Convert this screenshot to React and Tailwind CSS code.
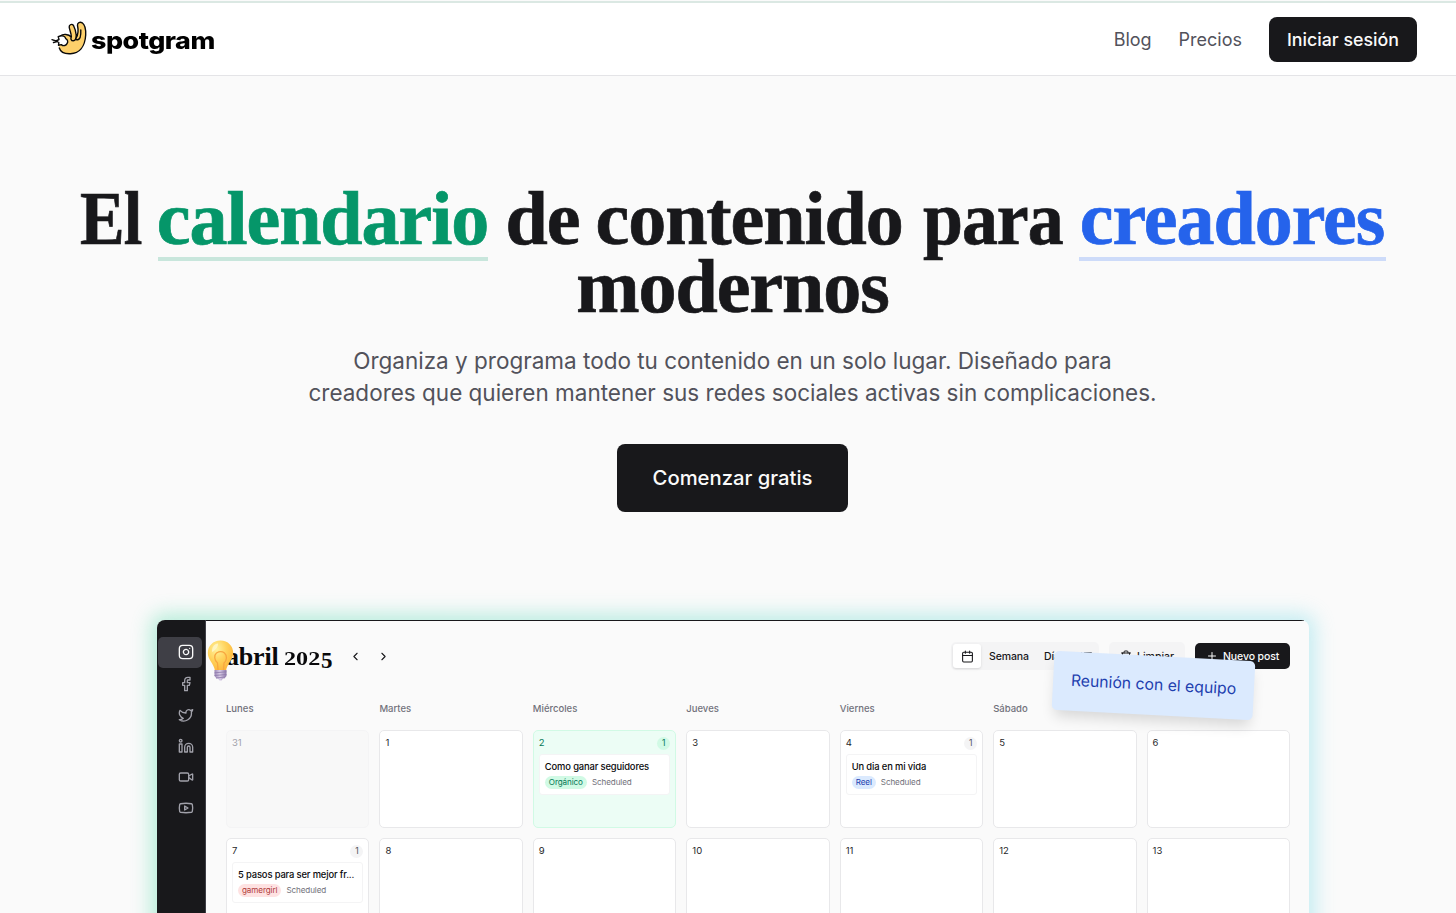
import React from "react";
import {
  Instagram, Facebook, Twitter, Linkedin, Video, Youtube,
  ChevronLeft, ChevronRight, Calendar, Trash2, Plus, List,
} from "lucide-react";

const weekdays = ["Lunes", "Martes", "Miércoles", "Jueves", "Viernes", "Sábado", "Domingo"];

const days = [
  { n: 31, muted: true },
  { n: 1 },
  { n: 2, green: true, post: { title: "Como ganar seguidores", tag: "Orgánico", tone: "bg-[#d1fae5] text-[#047857]" } },
  { n: 3 },
  { n: 4, post: { title: "Un dia en mi vida", tag: "Reel", tone: "bg-[#dbeafe] text-[#1e40af]" } },
  { n: 5 },
  { n: 6 },
  { n: 7, post: { title: "5 pasos para ser mejor fr...", tag: "gamergirl", tone: "bg-[#fee2e2] text-[#b03a3a]" } },
  { n: 8 }, { n: 9 }, { n: 10 }, { n: 11 }, { n: 12 }, { n: 13 },
];

function Sloth() {
  return (
    <svg className="h-[36px] w-[37px] shrink-0" viewBox="0 0 37 36" fill="none" stroke="#0b0b0b" strokeWidth="1.4" strokeLinecap="round" strokeLinejoin="round">
      <path fill="#fdd06b" stroke="none" d="M8.300 27 C9.500 31 14 33 19.500 32.700 C28 32 34 26 34.700 14 C34.900 9 34.300 4 31.500 1.800 C29 .8 26.500 1.500 26 4.500 C27 8 27 11 26 14.500 C25 11 24 7 22.500 4.200 C21 2.500 18 3.500 18.200 6 C18.500 9 20.500 12 20.500 16 C18 13.500 13 12.500 10 14.500 C10 20 7.500 23 8.300 27Z" />
      <path fill="#fff" stroke="none" d="M22.800 4.500 L26.400 4.500 C27 8 27 12 25.600 15.500 C25.300 11 24.500 8 22.800 4.500Z" />
      <path d="M9.300 15 C12 12.500 17.500 13 20.400 16 C20.300 12 18.500 9 18.200 6 C18 3.500 21 2.500 22.500 4.500 C24 7.500 25 10.500 25.200 14 C25.200 17.500 24.500 19.700 22.300 19.800 C20 19.800 19.300 17.500 20.400 15.500 M25.100 17 C27 14 27.500 9 26.500 4.500 C26.200 1.500 29 .6 31.200 1.800 C34.300 4 34.900 9 34.700 14 C34 26 28 32.300 19.500 32.700 C14 33 9.500 31 8.300 27 M29.800 9 C30 14 29 18.500 26.600 18.800 C25.500 18.900 25 18.200 25 17.200" />
      <path fill="#fff" d="M9.300 15 L7.200 15.600 L8 18.500 L5 20 L7.800 21.500 L7.500 24.300 L10.300 23.600 C12.500 25.500 15.500 24.500 16.200 22.300 C17.300 20.500 16.500 18.500 14.700 17.700 C14.200 15.500 11.800 14.200 9.300 15Z" />
      <path d="M1 18.700 L5 20 M2.500 21.500 L6 20.500" />
    </svg>
  );
}

function Bulb() {
  return (
    <svg className="absolute left-[50px] top-[20px] h-[41px] w-[27px]" viewBox="0 0 27 41">
      <defs>
        <radialGradient id="glass" cx="0.35" cy="0.28" r="0.75">
          <stop offset="0" stopColor="#fff3a0" />
          <stop offset="0.5" stopColor="#ffd35c" />
          <stop offset="1" stopColor="#fdb53a" />
        </radialGradient>
        <linearGradient id="base" x1="0" x2="1" y1="0" y2="0">
          <stop offset="0" stopColor="#9a86b5" />
          <stop offset="0.45" stopColor="#d9cde6" />
          <stop offset="1" stopColor="#8d78aa" />
        </linearGradient>
      </defs>
      <path fill="url(#glass)" d="M13.500 .5 C6 .5 .8 6 .8 13 C.8 20 7 23.500 8 31 L19 31 C20 23.500 26.200 20 26.200 13 C26.200 6 21 .5 13.500 .5Z" />
      <path fill="#fff8cf" opacity=".8" d="M5 10 C5.500 6 8 3.800 11 3.500 C11.500 6 9 10 5 12Z" />
      <path fill="none" stroke="#f8a640" strokeWidth="1.300" d="M11 30 L10.500 23 C7 20.500 7 15 9.500 13 C12 11.500 15.500 11.500 17.500 13 C20.300 15.500 20 20.500 17 23 L16.500 30" />
      <path fill="url(#base)" d="M7.500 30 H19.500 V36 L17.500 38.500 H16 L14.500 40.500 H12.500 L11 38.500 H9.500 L7.500 36Z" />
      <path stroke="#8d78aa" strokeWidth=".8" d="M7.500 32.800 L19.500 31.800 M7.500 35.500 L19.500 34.500 M9 38 L18 37" />
    </svg>
  );
}

function Day({ day }) {
  const box = day.muted
    ? "border-[#f4f4f5] bg-[#f8f8f8] text-[#a1a1aa]"
    : day.green
      ? "border-[#d1fae5] bg-[#ecfdf5] text-[#047857]"
      : "border-[#e8e8ea] bg-white text-[#27272a]";
  const count = day.green ? "bg-[#d1fae5] text-[#047857]" : "bg-[#f4f4f5] text-[#52525b]";
  return (
    <div className={"h-[98px] rounded-[5px] border px-[5px] pt-[5px] " + box}>
      <div className="flex h-[14px] items-center justify-between text-[9.5px]">
        <span className="pt-px">{day.n}</span>
        {day.post && <span className={"grid h-[13px] w-[13px] place-items-center rounded-full text-[8.5px] " + count}>1</span>}
      </div>
      {day.post && (
        <div className="mt-[4px] h-[41px] rounded-[3px] border border-[#f4f4f5] bg-white px-[5px] pt-[5px]">
          <div className="whitespace-nowrap text-[9.4px] font-medium leading-[13px] tracking-[-0.14px] text-[#09090b]">{day.post.title}</div>
          <div className="mt-[3px] flex items-center gap-[5px] text-[8.100px] leading-[13px] tracking-[-0.1px]">
            <span className={"rounded-full px-[4px] " + day.post.tone}>{day.post.tag}</span>
            <span className="text-[#71717a]">Scheduled</span>
          </div>
        </div>
      )}
    </div>
  );
}

function Header() {
  return (
    <header className="flex h-[76px] items-center justify-between border-b border-[#e4e4e7] bg-white pl-[51px] pr-[39px] pt-[3px]">
      <a className="flex items-center gap-[3px]">
        <Sloth />
        <span className="mt-[4px] origin-left scale-x-[1.14] whitespace-nowrap text-[23.500px] font-extrabold leading-[30px] tracking-[-0.4px] text-black">spotgram</span>
      </a>
      <nav className="flex items-center text-[18px] text-[#52525b]">
        <a className="tracking-[-0.05px]">Blog</a>
        <a className="ml-[27px]">Precios</a>
        <a className="ml-[27px] flex h-[45px] w-[148px] items-center justify-center rounded-[8px] bg-[#18181b] pt-[2px] text-[17.800px] font-medium text-[#fafafa]">Iniciar sesión</a>
      </nav>
    </header>
  );
}

function Hero() {
  return (
    <section className="flex flex-col items-center pl-[9px] pt-[108px]">
      <h1 className="flex flex-col items-center font-['Liberation_Serif'] text-[76px] font-bold leading-[68px] tracking-[-1.05px] text-[#18181b] [-webkit-text-stroke:0.7px_currentColor]">
        <span className="flex h-[68px] whitespace-nowrap">
          <span className="w-[78px] origin-left scale-x-[0.88]">El</span>
          <span className="flex h-[77px] w-[330px] justify-center border-b-4 border-[#c8e6dc] text-[#059669]">calendario</span>
          <span className="ml-[18px] w-[90px]">de</span>
          <span className="w-[327px]">contenido</span>
          <span className="w-[156px] origin-left scale-x-[0.945]">para</span>
          <span className="flex h-[77px] w-[307px] justify-center border-b-4 border-[#cddbf9] text-[#2563eb]">creadores</span>
        </span>
        <span>modernos</span>
      </h1>
      <p className="mt-[25px] text-center text-[22.500px] leading-[32px] text-[#52525b]">
        Organiza y programa todo tu contenido en un solo lugar. Diseñado para<br />
        creadores que quieren mantener sus redes sociales activas sin complicaciones.
      </p>
      <a className="mt-[35px] flex h-[68px] w-[231px] items-center justify-center rounded-[8px] bg-[#18181b] text-[20.250px] font-medium text-[#fafafa]">Comenzar gratis</a>
    </section>
  );
}

function Preview() {
  const side = [Instagram, Facebook, Twitter, Linkedin, Video, Youtube];
  return (
    <section className="relative ml-[157px] mt-[108px] w-[1152px]">
      <div className="absolute -inset-[6px] rounded-xl bg-gradient-to-r from-[#34d399] to-[#5fd3e3] opacity-35 blur-[10px]" />
      <div className="relative flex h-[600px] overflow-hidden rounded-[8px] bg-[#fafafa]">
        <aside className="w-[49px] shrink-0 border-r border-[#3f3f46] bg-[#18181b] pt-[17px]">
          {side.map((Icon, i) => (
            <div key={i} className={"ml-px flex h-[31px] w-[44px] items-center justify-end rounded-[5px] pr-[8px] " + (i === 0 ? "bg-[#3f3f46] pb-px text-[#fafafa]" : "text-[#a1a1aa]")}>
              <Icon size={16} strokeWidth={2} />
            </div>
          ))}
        </aside>
        <div className="flex-1">
          <div className="mr-[5px] h-px bg-[#18181b]" />
          <div className="pl-[20px] pr-[19px] pt-[21px]">
            <div className="flex h-[28px] items-center justify-between">
              <div className="flex items-center">
                <h2 className="flex w-[107px] translate-y-[2px] items-baseline whitespace-nowrap font-['Liberation_Serif'] text-[26px] font-bold leading-[28px] tracking-[-0.2px] text-[#09090b]">
                  <span className="w-[58px]">abril</span>
                  <span className="w-[37px] origin-left scale-x-[1.27] text-[19px] tracking-normal">202</span>
                  <span className="translate-y-[3px] text-[23px]">5</span>
                </h2>
                <ChevronLeft className="ml-[16px] text-[#18181b]" size={13} strokeWidth={2} />
                <ChevronRight className="ml-[15px] text-[#18181b]" size={13} strokeWidth={2} />
              </div>
              <div className="flex items-center text-[10.5px] font-medium text-[#18181b]">
                <div className="flex h-[28px] w-[148px] items-center rounded-[5px] bg-[#f4f4f5] pl-[2px]">
                  <span className="grid h-[24px] w-[28px] place-items-center rounded-[3px] bg-white shadow-sm"><Calendar size={13} /></span>
                  <span className="ml-[8px] translate-y-px tracking-[-0.1px]">Semana</span>
                  <span className="ml-[15px] translate-y-px">Día</span>
                  <List className="ml-[20px]" size={13} />
                </div>
                <div className="ml-[10px] flex h-[28px] w-[76px] items-center rounded-[5px] bg-[#f4f4f5] pl-[11px]">
                  <Trash2 size={12} /><span className="ml-[5px] translate-y-px">Limpiar</span>
                </div>
                <div className="ml-[10px] flex h-[26px] w-[95px] items-center rounded-[5px] bg-[#18181b] pl-[11px] text-[#fafafa]">
                  <Plus size={12} /><span className="ml-[5px] translate-y-px whitespace-nowrap tracking-[-0.1px]">Nuevo post</span>
                </div>
              </div>
            </div>
            <div className="mt-[32px] grid grid-cols-7 gap-x-[10px] text-[9.5px] font-medium leading-[14px] text-[#71717a]">
              {weekdays.map((d) => <span key={d}>{d}</span>)}
            </div>
            <div className="mt-[14px] grid grid-cols-7 gap-[10px]">
              {days.map((d) => <Day key={d.n} day={d} />)}
            </div>
          </div>
        </div>
      </div>
      <Bulb />
      <div className="absolute left-[896px] top-[36px] flex h-[59px] w-[201px] rotate-3 items-center justify-center whitespace-nowrap rounded-[5px] bg-[#dbeafe] pb-[2px] text-[15.750px] text-[#1e40af] shadow-[0_9px_14px_-3px_rgba(0,0,0,0.14)]">Reunión con el equipo</div>
    </section>
  );
}

export default function App() {
  return (
    <div className="relative h-[913px] overflow-hidden bg-[#fafafa] font-['Inter',sans-serif]">
      <div className="absolute left-0 top-0 h-[3px] w-full border-b-2 border-[#dbe8e3] bg-[#fafafa]" />
      <Header />
      <Hero />
      <Preview />
    </div>
  );
}
